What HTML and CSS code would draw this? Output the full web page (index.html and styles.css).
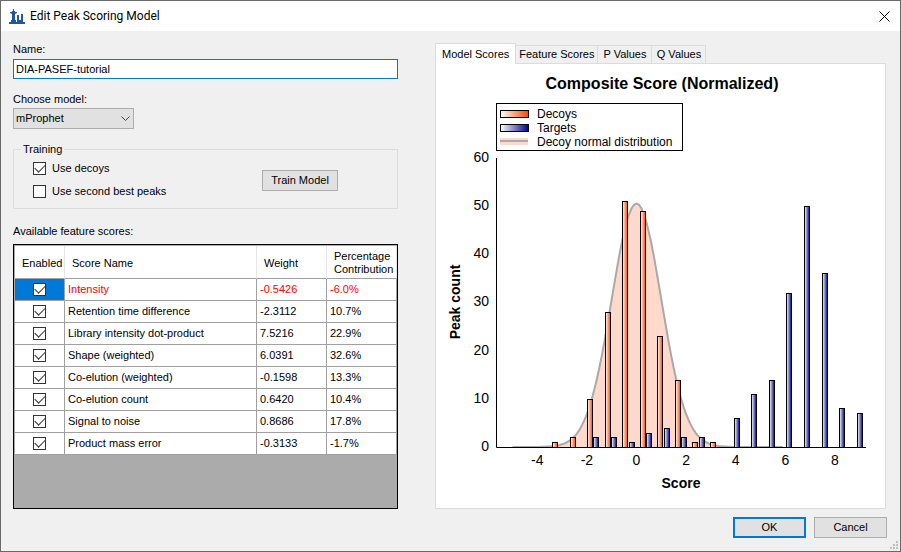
FILE: index.html
```html
<!DOCTYPE html>
<html lang="en">
<head>
    <meta charset="UTF-8">
    <meta name="viewport" content="width=device-width, initial-scale=1.0">
    <title>Edit Peak Scoring Model</title>
    <link rel="stylesheet" href="styles.css">
</head>
<body>
    <div class="dialog">
        <header class="titlebar">
            <svg class="app-icon" width="16" height="15" viewBox="0 0 16 15" aria-hidden="true">
                <path d="M0 13h16v2H0z M4 0h1v2h1v1h2v1l-2 1v6h1v2H2v-2h1V5L1 4V3h2V2h1z M8 6h2v5h2V5h2v8H8z"/>
            </svg>
            <h1>Edit Peak Scoring Model</h1>
            <button class="close" aria-label="Close">
                <svg width="11" height="11" viewBox="0 0 11 11"><path d="M.5 .5l10 10M10.5 .5l-10 10"/></svg>
            </button>
        </header>

        <form class="content" onsubmit="return false">
            <div class="settings">
                <label for="name">Name:</label>
                <input type="text" id="name" class="name" value="DIA-PASEF-tutorial">

                <label for="model">Choose model:</label>
                <div class="select">
                    <select id="model">
                        <option>mProphet</option>
                    </select>
                    <svg width="9" height="6" viewBox="0 0 9 6"><path d="M.5 .5l4 4 4-4"/></svg>
                </div>

                <fieldset>
                    <legend>Training</legend>
                    <div class="checks">
                        <label><input type="checkbox" checked> Use decoys</label>
                        <label><input type="checkbox"> Use second best peaks</label>
                    </div>
                    <button class="train">Train Model</button>
                </fieldset>

                <p class="caption" id="scores-label">Available feature scores:</p>
                <div class="grid">
                    <table aria-labelledby="scores-label">
                        <thead>
                            <tr><th class="col-enabled">Enabled</th><th class="col-name">Score Name</th><th class="col-weight">Weight</th><th class="col-percent">Percentage Contribution</th></tr>
                        </thead>
                        <tbody>
                            <tr class="negative"><td class="selected"><input type="checkbox" aria-label="Intensity" checked></td><td>Intensity</td><td>-0.5426</td><td>-6.0%</td></tr>
                            <tr><td><input type="checkbox" aria-label="Retention time difference" checked></td><td>Retention time difference</td><td>-2.3112</td><td>10.7%</td></tr>
                            <tr><td><input type="checkbox" aria-label="Library intensity dot-product" checked></td><td>Library intensity dot-product</td><td>7.5216</td><td>22.9%</td></tr>
                            <tr><td><input type="checkbox" aria-label="Shape (weighted)" checked></td><td>Shape (weighted)</td><td>6.0391</td><td>32.6%</td></tr>
                            <tr><td><input type="checkbox" aria-label="Co-elution (weighted)" checked></td><td>Co-elution (weighted)</td><td>-0.1598</td><td>13.3%</td></tr>
                            <tr><td><input type="checkbox" aria-label="Co-elution count" checked></td><td>Co-elution count</td><td>0.6420</td><td>10.4%</td></tr>
                            <tr><td><input type="checkbox" aria-label="Signal to noise" checked></td><td>Signal to noise</td><td>0.8686</td><td>17.8%</td></tr>
                            <tr><td><input type="checkbox" aria-label="Product mass error" checked></td><td>Product mass error</td><td>-0.3133</td><td>-1.7%</td></tr>
                        </tbody>
                    </table>
                </div>
            </div>

            <div class="graphs">
                <div class="tabs" role="tablist">
                    <button role="tab" class="tab active" aria-selected="true">Model Scores</button>
                    <button role="tab" class="tab">Feature Scores</button>
                    <button role="tab" class="tab">P Values</button>
                    <button role="tab" class="tab">Q Values</button>
                </div>
                <div class="panel">
                    <svg class="chart" viewBox="0 0 449 444" role="img" aria-label="Composite Score (Normalized)">
                        <defs>
                            <linearGradient id="decoy"><stop offset="0" stop-color="#fff"/><stop offset="1" stop-color="#ff4500"/></linearGradient>
                            <linearGradient id="target"><stop offset="0" stop-color="#fff"/><stop offset="1" stop-color="#00008b"/></linearGradient>
                        </defs>
                        <text class="chart-title" x="226" y="25">Composite Score (Normalized)</text>
                        <path id="curve" class="curve"/>
                        <g id="bars" class="bars"></g>
                        <path class="axis" d="M60.5 94V383.5H430"/>
                        <g id="ticks" class="ticks"></g>
                        <text class="axis-title" x="245" y="424">Score</text>
                        <text class="axis-title" transform="translate(24 238) rotate(-90)">Peak count</text>
                        <g class="legend">
                            <rect class="box" x="60.5" y="39.5" width="186" height="47"/>
                            <rect class="box" x="64.5" y="46.5" width="28" height="7" fill="url(#decoy)"/>
                            <rect class="box" x="64.5" y="60.5" width="28" height="7" fill="url(#target)"/>
                            <rect x="64" y="74" width="28" height="7" fill="#ffdacc"/>
                            <rect x="64" y="76" width="28" height="2" fill="#a9a9a9"/>
                            <text x="101" y="54">Decoys</text>
                            <text x="101" y="68">Targets</text>
                            <text x="101" y="82">Decoy normal distribution</text>
                        </g>
                    </svg>
                </div>
            </div>
        </form>

        <footer class="actions">
            <button class="default">OK</button>
            <button>Cancel</button>
            <svg class="grip" width="9" height="9" viewBox="0 0 9 9" aria-hidden="true">
                <path d="M6 0h2v2H6z M3 3h2v2H3z M6 3h2v2H6z M0 6h2v2H0z M3 6h2v2H3z M6 6h2v2H6z"/>
            </svg>
        </footer>
    </div>

    <script>
        const NS = 'http://www.w3.org/2000/svg';
        const zeroX = 200.5, unitX = 24.8;
        const zeroY = 383, unitY = 4.82;
        const binWidth = 17.55;

        const decoys = [1, 2, 10, 28, 51, 49, 23, 14, 1, 1];
        const targets = [2, 2, 1, 3, 4, 2, 2, 0, 6, 11, 14, 32, 50, 36, 8, 7];

        function add(parent, tag, attributes, text) {
            const element = document.createElementNS(NS, tag);
            for (const key in attributes) {
                element.setAttribute(key, attributes[key]);
            }
            if (text !== undefined) {
                element.textContent = text;
            }
            document.getElementById(parent).appendChild(element);
        }

        function drawBars(values, start, fill) {
            values.forEach((value, i) => {
                if (!value) return;
                const left = Math.round(start + i * binWidth);
                const top = Math.round(zeroY - value * unitY);
                add('bars', 'rect', {
                    x: left + 0.5, y: top + 0.5, width: 5, height: zeroY - top, fill: fill
                });
            });
        }

        // standard normal, scaled to the decoy histogram
        let path = '';
        for (let z = -5; z <= 5.9; z += 0.1) {
            const y = zeroY - 50.5 * Math.exp(-z * z / 2) * unitY;
            path += (path ? 'L' : 'M') + (zeroX + z * unitX).toFixed(1) + ' ' + y.toFixed(1);
        }
        document.getElementById('curve').setAttribute('d', path);

        drawBars(decoys, 116, 'url(#decoy)');
        drawBars(targets, 157.4, 'url(#target)');

        for (let x = -4; x <= 8; x += 2) {
            add('ticks', 'text', { x: zeroX + x * unitX, y: 401 }, x);
        }
        for (let y = 0; y <= 60; y += 10) {
            add('ticks', 'text', { x: 53, y: zeroY + 4 - y * unitY, class: 'tick-y' }, y);
        }
    </script>
</body>
</html>
```
FILE: styles.css
```css
* {
    box-sizing: border-box;
}
body {
    margin: 0;
    font-family: "Liberation Sans", Arial, sans-serif;
    font-size: 11px;
    line-height: 13px;
    color: #000;
}
button, input, select {
    font: inherit;
    color: inherit;
    margin: 0;
}
button {
    height: 21px;
    padding: 0;
    background: #e1e1e1;
    border: 1px solid #adadad;
}
.dialog {
    display: flex;
    flex-direction: column;
    min-height: 100vh;
    border: 1px solid #696969;
    background: #f0f0f0;
}
.titlebar {
    display: flex;
    align-items: center;
    gap: 5px;
    height: 30px;
    padding: 0 10px 0 8px;
    background: #fff;
}
.titlebar h1 {
    flex: 1;
    margin: 0;
    font: 12px/16px Roboto, sans-serif;
}
.app-icon {
    fill: #1f56a0;
}
.close {
    display: flex;
    align-items: center;
    background: none;
    border: none;
}
.close path {
    stroke: #000;
}
.content {
    flex: 1;
    display: grid;
    grid-template-columns: 385fr 451fr;
    gap: 37px;
    padding: 12px 14px 0 12px;
}
.settings {
    display: flex;
    flex-direction: column;
}
.name {
    height: 20px;
    margin: 3px 0 14px;
    padding: 0 2px;
    background: #fff;
    border: 1px solid #0078d7;
    outline: none;
}
.select {
    position: relative;
    width: 121px;
    margin: 2px 0 14px;
}
.select select {
    display: block;
    width: 100%;
    height: 21px;
    padding: 0 2px;
    appearance: none;
    background: #e1e1e1;
    border: 1px solid #adadad;
    border-radius: 0;
}
.select svg {
    position: absolute;
    right: 4px;
    top: 8px;
    fill: none;
    stroke: #444;
    pointer-events: none;
}
fieldset {
    display: flex;
    justify-content: space-between;
    align-items: center;
    min-width: 0;
    height: 66px;
    margin: 0 0 16px;
    padding: 6px 59px 0 19px;
    border: 1px solid #dcdcdc;
}
legend {
    margin-left: -12px;
    padding: 0 2px;
}
.checks {
    display: grid;
    gap: 10px;
}
.checks label {
    display: flex;
    align-items: center;
    gap: 6px;
}
input[type="checkbox"] {
    display: grid;
    place-items: center;
    width: 13px;
    height: 13px;
    appearance: none;
    background: #fff;
    border: 1px solid #333;
}
input[type="checkbox"]:checked::before {
    content: "";
    width: 9px;
    height: 5px;
    margin-bottom: 3px;
    border: solid #333;
    border-width: 0 0 1px 1px;
    transform: rotate(-45deg);
}
.train {
    width: 76px;
}
.caption {
    margin: 0 0 6px;
}
.grid {
    flex: 1;
    padding: 1px 0 0 1px;
    background: #ababab;
    border: 1px solid #000;
}
table {
    width: 100%;
    table-layout: fixed;
    border-collapse: separate;
    border-spacing: 0;
    background: #fff;
}
th {
    height: 33px;
    padding: 2px 0 0 7px;
    font-weight: normal;
    text-align: left;
    border-right: 1px solid #e5e5e5;
    border-bottom: 1px solid #a0a0a0;
}
td {
    height: 22px;
    padding: 0 3px;
    border-right: 1px solid #a0a0a0;
    border-bottom: 1px solid #a0a0a0;
}
td input[type="checkbox"] {
    margin: 0 auto;
}
.col-enabled {
    width: 50px;
}
.col-weight,
.col-percent {
    width: 70px;
}
.negative {
    color: #f00;
}
.selected {
    background: #0078d7;
}
.graphs {
    display: flex;
    flex-direction: column;
}
.tabs {
    display: flex;
    align-items: flex-end;
}
.tab {
    height: 18px;
    min-width: 54px;
    padding: 0 3px;
    background: #f0f0f0;
    border: 1px solid #dcdcdc;
    border-width: 1px 1px 0 0;
}
.tab.active {
    height: 21px;
    margin-bottom: -1px;
    padding: 0 6px;
    background: #fff;
    border-left-width: 1px;
    z-index: 1;
}
.panel {
    flex: 1;
    background: #fff;
    border: 1px solid #dcdcdc;
}
.chart {
    display: block;
    width: 100%;
}
.chart-title {
    font-size: 16px;
    font-weight: bold;
    text-anchor: middle;
}
.axis-title {
    font-size: 14px;
    font-weight: bold;
    text-anchor: middle;
}
.curve {
    fill: #ffdacc;
    stroke: #a9a9a9;
    stroke-width: 2;
}
.axis {
    fill: none;
    stroke: #000;
}
.bars rect {
    stroke: #000;
}
.ticks {
    font-size: 14px;
    text-anchor: middle;
}
.tick-y {
    text-anchor: end;
}
.legend {
    font-size: 12px;
}
.legend .box {
    stroke: #000;
}
.legend .box:first-child {
    fill: #fff;
}
.actions {
    position: relative;
    display: flex;
    justify-content: flex-end;
    gap: 8px;
    padding: 8px 13px 13px;
}
.actions button {
    width: 73px;
}
.actions .default {
    border: 2px solid #0078d7;
}
.grip {
    position: absolute;
    right: 1px;
    bottom: 1px;
    fill: #bfbfbf;
}
```
